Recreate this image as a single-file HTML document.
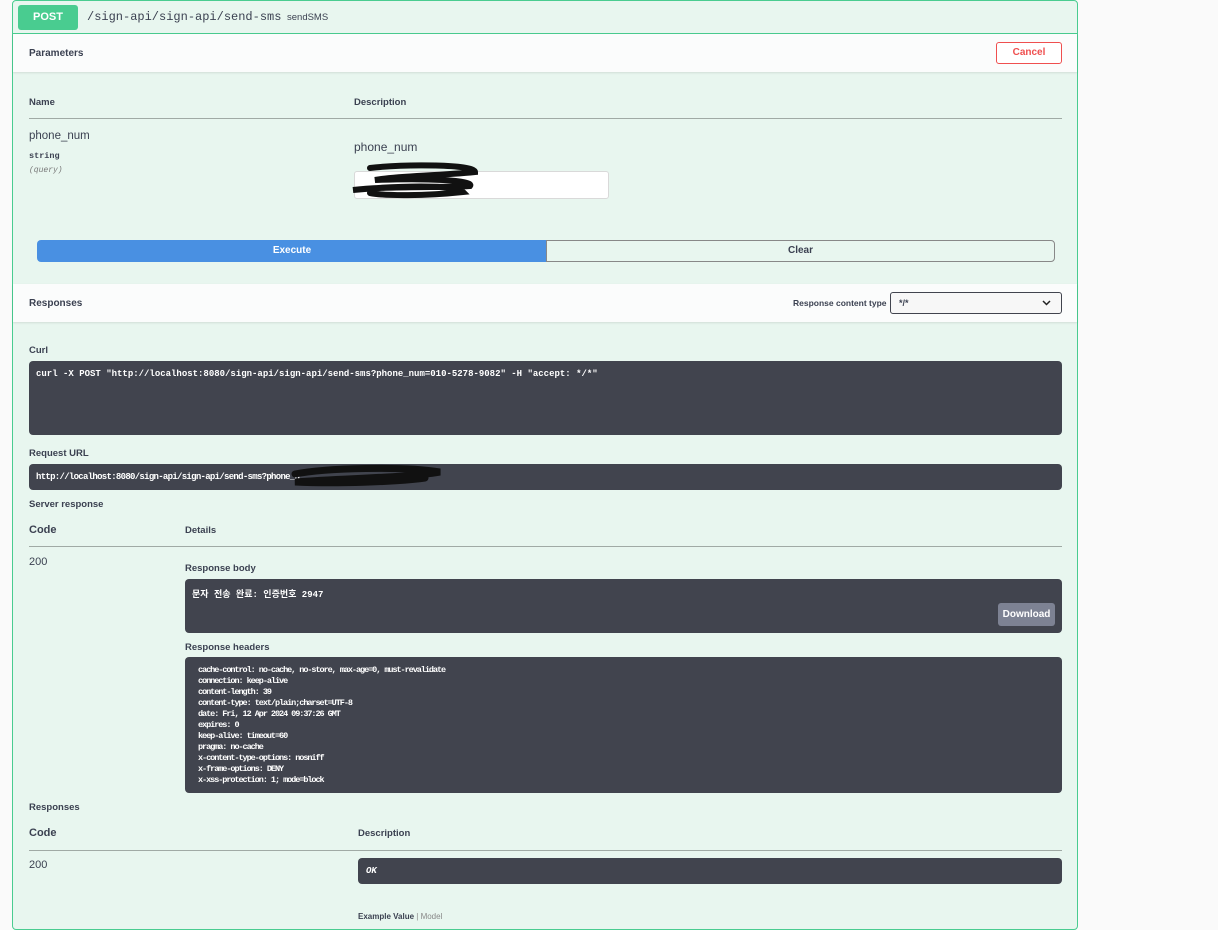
<!DOCTYPE html>
<html><head><meta charset="utf-8"><style>
*{box-sizing:border-box;margin:0;padding:0}
body{width:1218px;height:918px;background:#fafafa;font-family:"Liberation Sans","Noto Sans CJK KR",sans-serif;color:#3b4151;position:relative;overflow:hidden}
.op{position:absolute;left:12px;top:0;width:1066px;height:930px;border:1px solid #49cc90;border-radius:4px;background:#e8f6ef}
.a{position:absolute}
.mono{font-family:"Liberation Mono","Noto Sans CJK KR",monospace}
.dark{position:absolute;background:#41444e;border-radius:4px;color:#fff;font-family:"Liberation Mono","Noto Sans CJK KR",monospace;font-size:9px;font-weight:bold;white-space:pre}
.lbl{font-size:10px;font-weight:bold;color:#3b4151}
.hr{position:absolute;height:1px;background:#a0aaa5}
</style></head><body>
<div class="op"></div>
<div class="a" style="left:13px;top:33px;width:1064px;height:1px;background:#49cc90"></div>
<div class="a" style="left:18px;top:5px;width:60px;height:25px;background:#49cc90;border-radius:3px;color:#fff;font-size:11px;font-weight:bold;text-align:center;line-height:25px">POST</div>
<div class="a mono" style="left:87px;top:10px;font-size:12px;color:#3b4151">/sign-api/sign-api/send-sms</div>
<div class="a" style="left:287px;top:12px;font-size:9.5px;color:#3b4151">sendSMS</div>

<div class="a" style="left:13px;top:34px;width:1064px;height:38px;background:#fbfcfc;box-shadow:0 1px 2px rgba(0,0,0,.1)"></div>
<div class="a lbl" style="left:29px;top:48px">Parameters</div>
<div class="a" style="left:996px;top:42px;width:66px;height:22px;border:1px solid #ef4f4f;border-radius:3px;color:#ef4f4f;font-size:10px;font-weight:bold;text-align:center;line-height:20px;background:#fff">Cancel</div>

<div class="a lbl" style="left:29px;top:97px;font-size:9.5px">Name</div>
<div class="a lbl" style="left:354px;top:97px;font-size:9.5px">Description</div>
<div class="hr" style="left:29px;top:118px;width:1033px"></div>
<div class="a" style="left:29px;top:130px;font-size:11.5px;color:#3b4151">phone_num</div>
<div class="a mono" style="left:29px;top:151px;font-size:8.5px;font-weight:bold">string</div>
<div class="a mono" style="left:29px;top:166px;font-size:8px;font-style:italic;color:#777">(query)</div>
<div class="a" style="left:354px;top:140px;font-size:12px">phone_num</div>
<div class="a" style="left:354px;top:171px;width:255px;height:28px;background:#fff;border:1px solid #d9d9d9;border-radius:3px"></div>
<svg class="a" style="left:345px;top:160px" width="145" height="45"><path d="M25 8 C60 4 130 4 130 12 C90 16 50 16 30 20 C80 18 130 20 125 26 C90 28 40 26 8 30 C50 26 110 24 118 32 C80 36 40 36 25 33" fill="none" stroke="#111" stroke-width="6" stroke-linecap="round"/></svg>

<div class="a" style="left:37px;top:240px;width:510px;height:22px;background:#4990e2;border-radius:4px 0 0 4px;color:#fff;font-size:10px;font-weight:bold;text-align:center;line-height:22px">Execute</div>
<div class="a" style="left:546px;top:240px;width:509px;height:22px;border:1px solid #888;border-radius:0 4px 4px 0;font-size:10px;font-weight:bold;text-align:center;line-height:20px">Clear</div>

<div class="a" style="left:13px;top:284px;width:1064px;height:38px;background:#fbfcfc;box-shadow:0 1px 2px rgba(0,0,0,.1)"></div>
<div class="a lbl" style="left:29px;top:298px">Responses</div>
<div class="a" style="left:793px;top:298px;font-size:8.5px;font-weight:bold">Response content type</div>
<div class="a" style="left:890px;top:292px;width:172px;height:22px;border:1px solid #41444e;border-radius:3px;background:#f7f7f7;font-size:9px;font-weight:bold;padding:5px 8px">*/*
<svg class="a" style="right:10px;top:7px" width="9" height="6"><path d="M1 1 L4.5 4.5 L8 1" fill="none" stroke="#222" stroke-width="1.5"/></svg></div>

<div class="a lbl" style="left:29px;top:345px;font-size:9.5px">Curl</div>
<div class="dark" style="left:29px;top:361px;width:1033px;height:74px;padding:8px 7px">curl -X POST "http://localhost:8080/sign-api/sign-api/send-sms?phone_num=010-5278-9082" -H "accept: */*"</div>
<div class="a lbl" style="left:29px;top:448px;font-size:9.5px">Request URL</div>
<div class="dark" style="left:29px;top:464px;width:1033px;height:26px;padding:8px 7px;letter-spacing:-0.7px">http://localhost:8080/sign-api/sign-api/send-sms?phone_n</div>
<svg class="a" style="left:285px;top:462px" width="165" height="30"><path d="M10 12 C40 6 120 4 155 10 C120 16 60 16 10 20 C50 22 110 20 140 16" fill="none" stroke="#111" stroke-width="7" stroke-linecap="round"/></svg>
<div class="a lbl" style="left:29px;top:499px;font-size:9.5px">Server response</div>
<div class="a" style="left:29px;top:524px;font-size:11px;font-weight:bold">Code</div>
<div class="a lbl" style="left:185px;top:525px;font-size:9.5px">Details</div>
<div class="hr" style="left:29px;top:546px;width:1033px"></div>
<div class="a" style="left:29px;top:556px;font-size:11px">200</div>
<div class="a lbl" style="left:185px;top:563px;font-size:9.5px">Response body</div>
<div class="dark" style="left:185px;top:579px;width:877px;height:54px;padding:8px 7px">문자 전송 완료: 인증번호 2947</div>
<div class="a" style="left:998px;top:603px;width:57px;height:23px;background:#7d8293;border-radius:3px;color:#fff;font-size:10px;font-weight:bold;text-align:center;line-height:23px">Download</div>
<div class="a lbl" style="left:185px;top:642px;font-size:9.5px">Response headers</div>
<div class="dark" style="left:185px;top:657px;width:877px;height:136px;padding:8px 13px;font-size:8.5px;letter-spacing:-1.05px;line-height:11px">cache-control: no-cache, no-store, max-age=0, must-revalidate
connection: keep-alive
content-length: 39
content-type: text/plain;charset=UTF-8
date: Fri, 12 Apr 2024 09:37:26 GMT
expires: 0
keep-alive: timeout=60
pragma: no-cache
x-content-type-options: nosniff
x-frame-options: DENY
x-xss-protection: 1; mode=block</div>
<div class="a lbl" style="left:29px;top:802px;font-size:9.5px">Responses</div>
<div class="a" style="left:29px;top:827px;font-size:11px;font-weight:bold">Code</div>
<div class="a lbl" style="left:358px;top:828px;font-size:9.5px">Description</div>
<div class="hr" style="left:29px;top:850px;width:1033px"></div>
<div class="a" style="left:29px;top:859px;font-size:11px">200</div>
<div class="dark" style="left:358px;top:858px;width:704px;height:26px;padding:8px 8px;font-style:italic">OK</div>
<div class="a" style="left:358px;top:912px;font-size:8px;font-weight:bold">Example Value <span style="font-weight:normal;color:#888">| Model</span></div>
</body></html>
